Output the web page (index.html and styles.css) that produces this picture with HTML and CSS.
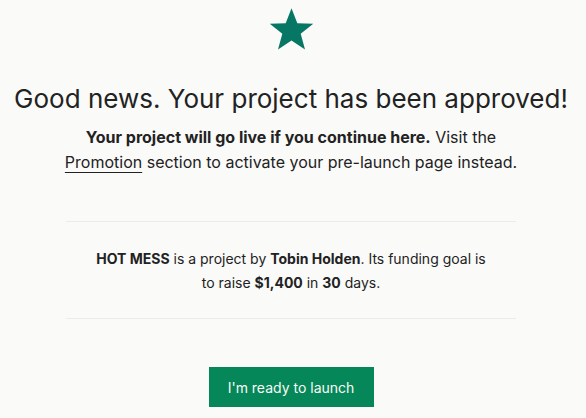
FILE: index.html
```html
<!DOCTYPE html>
<html>
<head>
<meta charset="utf-8">
<link rel="stylesheet" href="styles.css">
</head>
<body>
<main class="page">
  <svg class="star" viewBox="0 0 24 24" aria-hidden="true">
    <polygon points="12,0.6 15.1,8.6 23.6,8.9 16.9,14.2 19.2,22.6 12,17.8 4.8,22.6 7.1,14.2 0.4,8.9 8.9,8.6" fill="#077765"/>
  </svg>
  <h1 class="title">Good news. Your project has been approved!</h1>
  <p class="lead"><strong>Your project will go live if you continue here.</strong> Visit the <a class="link" href="#">Promotion</a> section to activate your pre-launch page instead.</p>
  <section class="summary">
    <p class="summary-text"><strong>HOT MESS</strong> is a project by <strong>Tobin Holden</strong>. Its funding goal is to raise <strong>$1,400</strong> in <strong>30</strong> days.</p>
  </section>
  <button class="launch" type="button">I'm ready to launch</button>
</main>
</body>
</html>
```
FILE: styles.css
```css
html, body {
  margin: 0;
  padding: 0;
  background: #fafaf9;
}
body {
  font-family: Inter, "Noto Sans", sans-serif;
  color: #222;
}
.page {
  display: flex;
  flex-direction: column;
  align-items: center;
  padding: 7px 4px 0 0;
}
.star {
  width: 45px;
  height: 45px;
  display: block;
}
.title {
  margin: 30px 0 0;
  font-size: 26px;
  font-weight: 400;
  line-height: 34px;
  white-space: nowrap;
  text-align: center;
}
.lead {
  width: 460px;
  margin: 9px 0 0;
  font-size: 16px;
  line-height: 25px;
  text-align: center;
}
.lead strong { font-weight: 700; }
.link {
  color: inherit;
  text-decoration: underline;
  text-underline-offset: 4px;
}
.summary {
  width: 450px;
  margin-top: 46px;
  border-top: 1px solid #ececec;
  border-bottom: 1px solid #ececec;
  padding: 25px 0 23px;
  display: flex;
  justify-content: center;
}
.summary-text {
  width: 400px;
  margin: 0;
  font-size: 14px;
  line-height: 24px;
  text-align: center;
}
.summary-text strong { font-weight: 700; }
.launch {
  margin-top: 48px;
  width: 165px;
  height: 40px;
  border: 0;
  background: #05875a;
  color: #fafaf4;
  font-family: Inter, "Noto Sans", sans-serif;
  font-size: 14px;
  cursor: pointer;
}
```
